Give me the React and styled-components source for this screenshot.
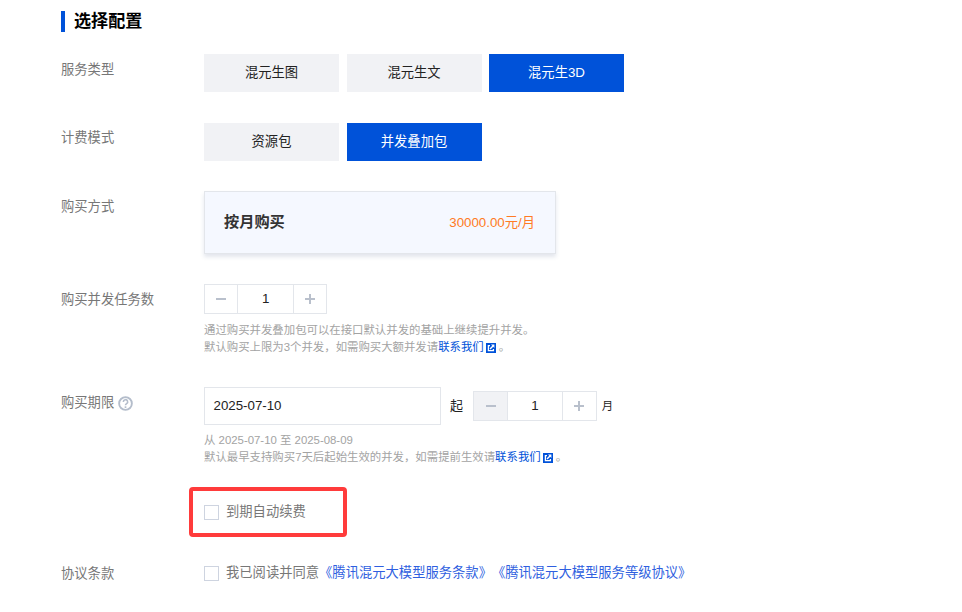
import React from "react";
import styled, { createGlobalStyle } from "styled-components";

const GlobalStyle = createGlobalStyle`
  html, body {
    margin: 0;
    padding: 0;
    background: #fff;
    font-family: "Liberation Sans", "Noto Sans CJK SC", sans-serif;
    text-spacing-trim: space-all;
    overflow: hidden;
  }
`;

const App = () => {
  return (
    <Page>
      <GlobalStyle />
      <Title>选择配置</Title>

      <Row $top={22}>
        <Label>服务类型</Label>
        <Options>
          <Option>混元生图</Option>
          <Option>混元生文</Option>
          <Option $active>混元生3D</Option>
        </Options>
      </Row>

      <Row $top={31}>
        <Label $pad={5}>计费模式</Label>
        <Options>
          <Option>资源包</Option>
          <Option $active>并发叠加包</Option>
        </Options>
      </Row>

      <Row $top={30}>
        <Label>购买方式</Label>
        <PlanCard>
          <PlanName>按月购买</PlanName>
          <PlanPrice>30000.00元/月</PlanPrice>
        </PlanCard>
      </Row>

      <Row $top={30}>
        <Label>购买并发任务数</Label>
        <div>
          <Stepper value="1" />
          <Help $top={8}>
            通过购买并发叠加包可以在接口默认并发的基础上继续提升并发。
            <br />
            默认购买上限为3个并发，如需购买大额并发请
            <ContactLink />。
          </Help>
        </div>
      </Row>

      <Row $top={31}>
        <Label>
          购买期限
          <HelpIcon />
        </Label>
        <div>
          <DateRow>
            <DateInput>2025-07-10</DateInput>
            <StartText>起</StartText>
            <Stepper value="1" $minusDisabled />
            <MonthText>月</MonthText>
          </DateRow>
          <Help $top={7}>
            从 2025-07-10 至 2025-08-09
            <br />
            默认最早支持购买7天后起始生效的并发，如需提前生效请
            <ContactLink />。
          </Help>
        </div>
      </Row>

      <RenewRow>
        <Highlight>
          <Check />
          <CheckText>到期自动续费</CheckText>
        </Highlight>
      </RenewRow>

      <Row $top={21}>
        <Label $pad={6}>协议条款</Label>
        <AgreeLine>
          <Check />
          <AgreeText>
            我已阅读并同意
            <AgreeLink>《腾讯混元大模型服务条款》</AgreeLink>
            <AgreeLink>《腾讯混元大模型服务等级协议》</AgreeLink>
          </AgreeText>
        </AgreeLine>
      </Row>
    </Page>
  );
};

const Stepper = ({ value, $minusDisabled }) => (
  <StepperBox>
    <StepButton $disabled={$minusDisabled}>
      <svg width="10" height="10" viewBox="0 0 10 10">
        <rect x="0" y="4" width="10" height="2" fill="currentColor" />
      </svg>
    </StepButton>
    <StepValue>{value}</StepValue>
    <StepButton>
      <svg width="10" height="10" viewBox="0 0 10 10">
        <rect x="0" y="4" width="10" height="2" fill="currentColor" />
        <rect x="4" y="0" width="2" height="10" fill="currentColor" />
      </svg>
    </StepButton>
  </StepperBox>
);

const ContactLink = () => (
  <>
    <Link>联系我们</Link>
    <ExternalIcon viewBox="0 0 10 10">
      <rect width="10" height="10" fill="#0052d9" />
      <path d="M4 2.6H2.4v5h5V6" fill="none" stroke="#fff" strokeWidth="1.3" />
      <path d="M4 6 7 3" fill="none" stroke="#fff" strokeWidth="1.5" />
      <path d="M5 1.6h3.4V5z" fill="#fff" />
    </ExternalIcon>
  </>
);

const HelpIcon = () => (
  <HelpSvg viewBox="0 0 16 16">
    <circle cx="8" cy="8" r="6.8" fill="none" stroke="#b4bdcb" strokeWidth="2" />
    <path
      d="M5.7 6.3a2.3 2.3 0 1 1 3.5 1.9c-.8.5-1.2.9-1.2 1.7"
      fill="none"
      stroke="#b4bdcb"
      strokeWidth="1.7"
    />
    <rect x="7.1" y="11" width="1.8" height="1.8" fill="#b4bdcb" />
  </HelpSvg>
);

export default App;

const Page = styled.div`
  width: 962px;
  height: 612px;
  box-sizing: border-box;
  padding: 11px 0 0 61px;
  overflow: hidden;
`;

const Title = styled.h2`
  margin: 0;
  height: 21px;
  line-height: 21px;
  border-left: 4px solid #0052d9;
  padding-left: 9px;
  font-size: 17.1px;
  font-weight: 700;
  color: #000;
`;

const Row = styled.div`
  display: grid;
  grid-template-columns: 143px 1fr;
  margin-top: ${(p) => p.$top}px;
`;

const Label = styled.div`
  font-size: 13.3px;
  line-height: 20px;
  padding-top: ${(p) => p.$pad ?? 6}px;
  color: #777;
  display: flex;
  align-items: center;
  align-self: start;
  gap: 4px;
  white-space: nowrap;
`;

const Options = styled.div`
  display: flex;
  gap: 7.5px;
`;

const Option = styled.div`
  width: 135px;
  height: 38px;
  line-height: 38px;
  text-align: center;
  font-size: 13.3px;
  background: ${(p) => (p.$active ? "#0052d9" : "#f1f2f5")};
  color: ${(p) => (p.$active ? "#fff" : "#222")};
`;

const PlanCard = styled.div`
  width: 352px;
  height: 63px;
  box-sizing: border-box;
  display: flex;
  align-items: center;
  justify-content: space-between;
  padding: 0 20px 2px 19px;
  background: #f5f8ff;
  border: 1px solid #e3e6eb;
  box-shadow: 0 3px 4px rgba(54, 80, 130, 0.14);
`;

const PlanName = styled.span`
  font-size: 15.2px;
  font-weight: 700;
  color: #333;
  margin-bottom: 3px;
`;

const PlanPrice = styled.span`
  font-size: 13.3px;
  color: #ff7b24;
`;

const StepperBox = styled.div`
  display: inline-flex;
  height: 30px;
  box-sizing: border-box;
  border: 1px solid #e3e6eb;
  vertical-align: top;
`;

const StepButton = styled.div`
  width: 32.4px;
  display: flex;
  align-items: center;
  justify-content: center;
  color: #b9c0cc;
  background: ${(p) => (p.$disabled ? "#f1f2f5" : "#fff")};
`;

const StepValue = styled.div`
  width: 54.6px;
  border-left: 1px solid #e3e6eb;
  border-right: 1px solid #e3e6eb;
  text-align: center;
  font-size: 13.3px;
  line-height: 28px;
  color: #222;
`;

const Help = styled.div`
  margin-top: ${(p) => p.$top}px;
  font-size: 11.4px;
  line-height: 17px;
  color: #a3a3a3;
  white-space: nowrap;
`;

const Link = styled.span`
  color: #0052d9;
`;

const ExternalIcon = styled.svg`
  width: 10px;
  height: 10px;
  margin: 0 3px 0 2px;
  vertical-align: -2px;
`;

const HelpSvg = styled.svg`
  width: 15px;
  height: 15px;
`;

const DateRow = styled.div`
  display: flex;
  align-items: center;
  height: 38px;
`;

const DateInput = styled.div`
  width: 237px;
  height: 38px;
  box-sizing: border-box;
  border: 1px solid #e3e6eb;
  padding-left: 8.5px;
  font-size: 13.3px;
  line-height: 36px;
  color: #222;
`;

const StartText = styled.span`
  font-size: 13px;
  color: #222;
  margin: 0 10.3px 0 9px;
  padding-bottom: 3px;
`;

const MonthText = styled.span`
  font-size: 11.4px;
  color: #222;
  margin-left: 5px;
  padding-bottom: 3px;
`;

const RenewRow = styled.div`
  margin: 21px 0 0 128px;
`;

const Highlight = styled.div`
  width: 158px;
  height: 50px;
  box-sizing: border-box;
  border: 4px solid #ff3b3b;
  border-radius: 4px;
  padding-left: 11px;
  display: flex;
  align-items: center;
  gap: 7px;
`;

const Check = styled.span`
  width: 15px;
  height: 15px;
  box-sizing: border-box;
  border: 1px solid #ced4e0;
  background: #fff;
  flex: none;
`;

const CheckText = styled.span`
  font-size: 13.3px;
  line-height: 20px;
  padding-bottom: 1px;
  color: #777;
`;

const AgreeLine = styled.div`
  display: flex;
  align-items: center;
  gap: 7px;
  height: 30px;
`;

const AgreeText = styled(CheckText)`
  white-space: nowrap;
`;

const AgreeLink = styled.span`
  color: #2f5fe0;
`;
